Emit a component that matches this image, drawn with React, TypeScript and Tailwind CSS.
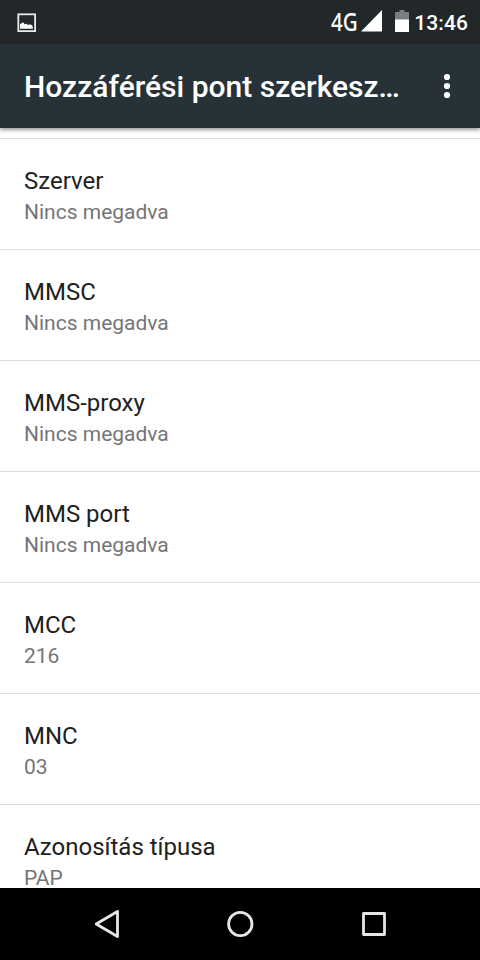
import React from "react";

type Setting = { title: string; summary: string };

const settings: Setting[] = [
  { title: "Szerver", summary: "Nincs megadva" },
  { title: "MMSC", summary: "Nincs megadva" },
  { title: "MMS-proxy", summary: "Nincs megadva" },
  { title: "MMS port", summary: "Nincs megadva" },
  { title: "MCC", summary: "216" },
  { title: "MNC", summary: "03" },
  { title: "Azonosítás típusa", summary: "PAP" },
];

function StatusBar() {
  return (
    <div className="flex h-11 shrink-0 items-center bg-[#22272a] pl-[17px] pr-3 text-white">
      <svg width="19" height="19" viewBox="0 0 19 19">
        <rect x="1.300" y="1.300" width="16.800" height="16.800" fill="none" stroke="#e6e8e8" strokeWidth="1.800" />
        <path d="M3 15.800V11l1.300-.6L6 9.200l1.800 2 1.600-.4 1.800 1.200 1.800-.8 2.400 1.300.6 3.300z" fill="#fff" />
      </svg>
      <div className="ml-auto flex items-center">
        <span className="w-[30px] pb-[2px] font-['Noto_Sans','Open_Sans',sans-serif] text-[26px] font-medium leading-[42px]">
          <span className="inline-block origin-left scale-x-[0.79]">4G</span>
        </span>
        <svg className="mb-[2px]" width="21" height="22" viewBox="0 0 21 22">
          <path d="M21 0v21.500H0z" fill="#fff" />
        </svg>
        <svg className="mb-[2px] ml-[13px]" width="14" height="22" viewBox="0 0 14 22">
          <path d="M4.500 0h5v2H14v8H0V2h4.500z" fill="#7b7e80" />
          <path d="M0 9.500h14V22H0z" fill="#fff" />
        </svg>
        <span className="ml-[5px] pt-[2px] text-[21px] font-medium leading-[42px] tracking-[0.1px]">13:46</span>
      </div>
    </div>
  );
}

function AppBar() {
  return (
    <header className="z-10 flex h-21 shrink-0 items-center justify-between bg-[#263238] pl-6 pr-[29px] shadow-[0_2px_4px_rgba(0,0,0,0.4)]">
      <h1 className="whitespace-nowrap pt-[2px] text-[30px] font-medium leading-[36px] text-white">
        Hozzáférési pont szerkesz…
      </h1>
      <button>
        <svg width="8" height="26" viewBox="0 0 8 26" fill="#fff">
          <circle cx="4" cy="4" r="3.100" />
          <circle cx="4" cy="13" r="3.100" />
          <circle cx="4" cy="22" r="3.100" />
        </svg>
      </button>
    </header>
  );
}

function SettingRow({ title, summary }: Setting) {
  return (
    <li className="h-[111px] shrink-0 border-t border-[#dcdcdc] px-6 pt-[26px]">
      <p className="text-[24px] leading-[32px] text-[#212121]">{title}</p>
      <p className="text-[21px] leading-[31px] text-[#757575]">{summary}</p>
    </li>
  );
}

function NavBar() {
  return (
    <nav className="flex h-18 shrink-0 items-center justify-between bg-black pl-[93px] pr-[92px]">
      <svg width="28" height="30" viewBox="0 0 28 30" fill="none" stroke="#e6e6e6" strokeWidth="2.800" strokeLinejoin="round">
        <path d="M24.500 2.500v25L3.200 15z" />
      </svg>
      <svg width="28" height="28" viewBox="0 0 28 28" fill="none" stroke="#e6e6e6" strokeWidth="2.800">
        <circle cx="13.300" cy="14" r="11.700" />
      </svg>
      <svg width="28" height="28" viewBox="0 0 28 28" fill="none" stroke="#e6e6e6" strokeWidth="2.800" strokeLinejoin="round">
        <rect x="3.500" y="3.500" width="21" height="21" />
      </svg>
    </nav>
  );
}

export default function App() {
  return (
    <div className="flex h-[960px] w-[480px] flex-col overflow-hidden bg-white font-[Roboto,sans-serif]">
      <StatusBar />
      <AppBar />
      <ul className="flex min-h-0 flex-1 flex-col overflow-hidden pt-[10px]">
        {settings.map((item) => (
          <SettingRow key={item.title} {...item} />
        ))}
      </ul>
      <NavBar />
    </div>
  );
}
